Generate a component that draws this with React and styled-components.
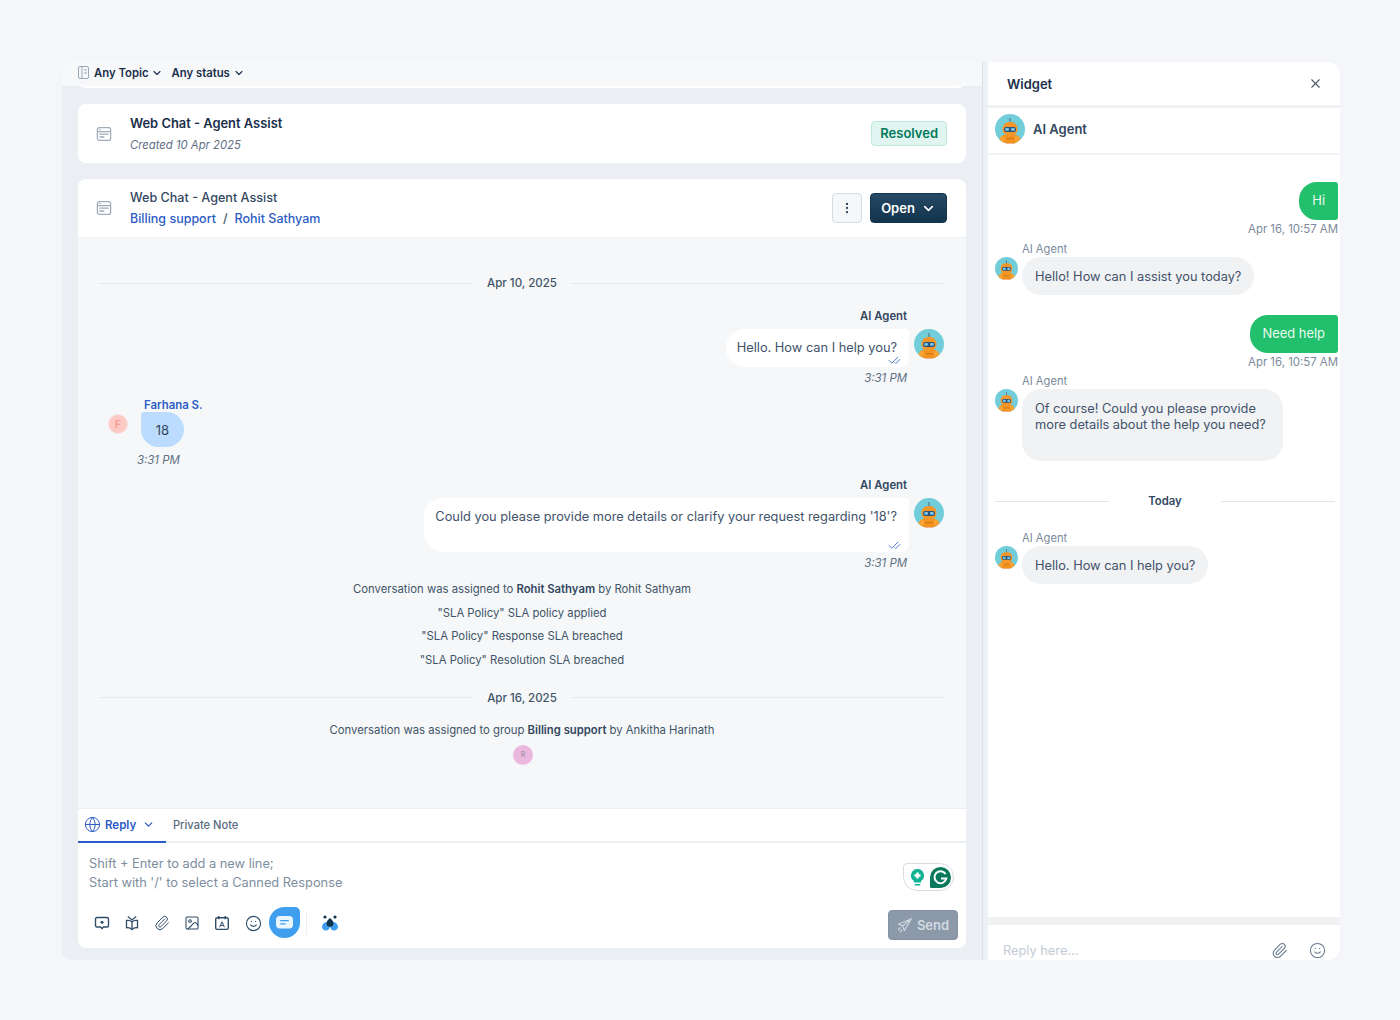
import React from 'react';
import styled, { createGlobalStyle } from 'styled-components';
import { ChevronDown, X, EllipsisVertical, CheckCheck, Globe, Paperclip, Smile, Image } from 'lucide-react';

const GlobalStyle = createGlobalStyle`
  html, body { margin: 0; padding: 0; background: #f5f6f9; }
  body { font-family: Inter, "Noto Sans", sans-serif; color: #1b2f4b; -webkit-font-smoothing: antialiased; }
`;

const RobotIcon = ({ size = 30 }) => (
  <svg width={size} height={size} viewBox="0 0 30 30" style={{ flex: 'none', display: 'block' }}>
    <defs><clipPath id="robot-clip"><circle cx="15" cy="15" r="15" /></clipPath></defs>
    <g clipPath="url(#robot-clip)">
      <rect width="30" height="30" fill="#70cdd9" />
      <rect x="14.5" y="4" width="1" height="5" fill="#4f6a80" />
      <path d="M8 30v-9h14v9z" fill="#f2931f" />
      <path d="M3.500 27l3-5.500 4 1-1 5-3.500 1z M26.500 27l-3-5.500-4 1 1 5 3.500 1z" fill="#f7a233" />
      <rect x="7.500" y="8" width="15" height="14" rx="6.500" fill="#f5962a" />
      <rect x="9" y="13" width="12" height="5" rx="2.200" fill="#27557c" />
      <rect x="10.200" y="14" width="3.800" height="2.800" rx="1.100" fill="#7cc4e4" />
      <rect x="16" y="14" width="3.800" height="2.800" rx="1.100" fill="#7cc4e4" />
      <rect x="11" y="24" width="8" height="1.200" rx=".6" fill="#d4761a" />
      <path d="M8 30h14v-1H8z" fill="#fbb8a4" />
    </g>
  </svg>
);

const TicketIcon = () => (
  <svg width="16" height="16" viewBox="0 0 16 16" fill="none" stroke="#a1adbb" strokeWidth="1.3" style={{ flex: 'none' }}>
    <rect x="1.4" y="1.6" width="13.2" height="12.8" rx="2" />
    <path d="M1.4 5.6h13.2M3.4 3.6h1.4M3.4 8.2h9.2M3.4 11h5" />
  </svg>
);

const ScreenIcon = () => (
  <svg width="16" height="16" viewBox="0 0 16 16" fill="none" stroke="currentColor" strokeWidth="1.4">
    <path d="M3 2.5h10a1.5 1.5 0 0 1 1.5 1.5v6.5a1.5 1.5 0 0 1-1.5 1.5H9.5L8 13.5 6.5 12H3a1.5 1.5 0 0 1-1.5-1.5V4A1.5 1.5 0 0 1 3 2.5z" />
    <circle cx="8" cy="7.2" r="1.5" fill="currentColor" stroke="none" />
  </svg>
);

const BookIcon = () => (
  <svg width="16" height="16" viewBox="0 0 16 16" fill="none" stroke="currentColor" strokeWidth="1.3">
    <path d="M2.5 5.5C4.5 5 6.5 5.5 8 6.8c1.5-1.3 3.5-1.8 5.5-1.3v7.3c-2-.4-4 .1-5.5 1.7-1.5-1.6-3.5-2.1-5.5-1.7z" />
    <path d="M8 6.8v7M3.8 1.5L8 5l4.2-3.5" />
  </svg>
);

const CalendarIcon = () => (
  <svg width="16" height="16" viewBox="0 0 16 16" fill="none" stroke="currentColor" strokeWidth="1.4">
    <rect x="1.7" y="2.8" width="12.6" height="11.6" rx="1.4" />
    <path d="M4.8 1v3.2M11.2 1v3.2" />
    <path d="M5.6 12.2L8 6.8l2.4 5.4M6.5 10.4h3" strokeWidth="1" />
  </svg>
);

const Page = styled.div`
  width: 1400px;
  height: 1020px;
  padding: 62px 60px 60px 61px;
  box-sizing: border-box;
  overflow: hidden;
`;

const Shell = styled.div`
  display: flex;
  height: 898px;
  border-radius: 12px;
  overflow: hidden;
  background: #ebeef3;
`;

const Main = styled.div`
  width: 921px;
  flex: none;
  padding: 0 16px 12px 16px;
  border-left: 1px solid #f2f4f7;
  box-sizing: border-box;
  display: flex;
  flex-direction: column;
`;

const FilterBar = styled.div`
  height: 24px;
  flex: none;
  margin: 0 -16px;
  padding: 0 16px;
  background: #f7f8fa;
`;

const FilterRow = styled.div`
  height: 26px;
  background: #f7f8fa;
  border-bottom: 2px solid #fff;
  border-radius: 0 0 8px 8px;
  box-sizing: border-box;
  display: flex;
  align-items: center;
  padding: 0 0 3px 0;
  font-size: 11.3px;
  font-weight: 600;
`;

const Filter = styled.span`
  display: flex;
  align-items: center;
  gap: 3px;
  margin-right: 8px;
`;

const FilterIcon = styled.span`
  display: flex;
  margin-right: 5px;
`;

const Card = styled.div`
  background: #fff;
  border-radius: 8px;
  margin-top: 18px;
  height: 59px;
  flex: none;
  display: flex;
  align-items: center;
  padding: 0 19px 0 18px;
  box-sizing: border-box;
`;

const CardHead = styled(Card)`
  margin-top: 16px;
  border-radius: 8px 8px 0 0;
  border-bottom: 1px solid #ebeff3;
`;

const CardText = styled.div`
  margin-left: 18px;
  flex: 1;
  display: flex;
  flex-direction: column;
  gap: ${p => p.$gap}px;
  padding-top: ${p => p.$drop || 0}px;
`;

const CardTitle = styled.div`
  font-size: ${p => (p.$bold ? 12.9 : 12.6)}px;
  line-height: 16px;
  font-weight: ${p => (p.$bold ? 600 : 500)};
  color: ${p => (p.$bold ? '#1b2f4b' : '#33475f')};
`;

const Created = styled.div`
  font-size: 11.3px;
  line-height: 15px;
  font-style: italic;
  color: #5f7085;
`;

const Crumbs = styled.div`
  font-size: 12.5px;
  line-height: 15px;
  font-weight: 500;
  color: #2c5cc5;
  display: flex;
  gap: 7px;
  span { color: #475867; }
`;

const Resolved = styled.span`
  height: 25px;
  padding: 0 8px;
  line-height: 23px;
  box-sizing: border-box;
  background: #e0f5f0;
  border: 1px solid #bfe9dd;
  border-radius: 4px;
  color: #00795b;
  font-size: 13px;
  font-weight: 600;
`;

const MoreButton = styled.button`
  width: 30px;
  height: 30px;
  padding: 0;
  margin-right: 8px;
  background: #f5f7f9;
  border: 1px solid #d5dce4;
  border-radius: 4px;
  color: #33475f;
  display: flex;
  align-items: center;
  justify-content: center;
`;

const OpenButton = styled.button`
  width: 77px;
  height: 30px;
  background: linear-gradient(#264966, #12344d);
  border: 1px solid #12344d;
  border-radius: 4px;
  color: #fff;
  font: 600 13px Inter, sans-serif;
  display: flex;
  align-items: center;
  justify-content: center;
  gap: 6px;
  padding: 0;
`;

const Thread = styled.div`
  flex: 1;
  background: #f5f7f9;
  padding: 0 21px;
  display: flex;
  flex-direction: column;
`;

const DateRow = styled.div`
  display: flex;
  align-items: center;
  gap: 14px;
  margin-top: ${p => p.$top}px;
  height: 16px;
  font-size: 11.5px;
  font-weight: 500;
  color: #3f5468;
  &::before, &::after { content: ''; flex: 1; height: 1px; background: #e6e9ee; }
`;

const AgentBlock = styled.div`
  margin-top: ${p => p.$top}px;
  display: flex;
  justify-content: flex-end;
  gap: 5px;
  padding-right: 1px;
`;

const AgentStack = styled.div`
  display: flex;
  flex-direction: column;
  align-items: flex-end;
`;

const AgentName = styled.div`
  font-size: 11.3px;
  line-height: 14px;
  font-weight: 600;
  color: #33475f;
  margin: 0 2px 6px 0;
`;

const AgentBubble = styled.div`
  position: relative;
  background: #fff;
  border-radius: 19px 4px 8px 19px;
  padding: 10px 12px 0 11px;
  height: ${p => p.$h}px;
  box-sizing: border-box;
  font-size: 12.8px;
  line-height: 18px;
  color: #41526a;
`;

const Ticks = styled.span`
  position: absolute;
  right: 8px;
  bottom: 0;
  color: #2c5cc5;
  display: flex;
`;

const Time = styled.div`
  font-size: 11.4px;
  line-height: 14px;
  font-style: italic;
  color: #5f7085;
  margin: 4px 2px 0 0;
`;

const AgentAvatar = styled.div`
  margin-top: 20px;
`;

const UserBlock = styled.div`
  margin-top: 12px;
  height: 72px;
  display: grid;
  grid-template-columns: 33px auto 1fr;
  grid-template-rows: 15px 35px 22px;
  padding-left: 9px;
`;

const UserName = styled.div`
  grid-column: 2 / 4;
  font-size: 11.4px;
  line-height: 14px;
  font-weight: 600;
  color: #2c5cc5;
  padding-left: 3px;
  margin-top: 1px;
`;

const UserAvatar = styled.div`
  grid-row: 2;
  width: 20px;
  height: 20px;
  border-radius: 50%;
  background: #fdc9c4;
  color: #f79f92;
  border: 1px solid #fbe3e0;
  box-sizing: border-box;
  font-size: 11px;
  font-weight: 600;
  display: flex;
  align-items: center;
  justify-content: center;
  margin-top: 2px;
`;

const UserBubble = styled.div`
  grid-row: 2;
  width: 43px;
  background: #bbdcfe;
  border-radius: 4px 20px 20px 20px;
  font-size: 13px;
  color: #33475f;
  display: flex;
  align-items: center;
  justify-content: center;
`;

const UserTime = styled.div`
  grid-column: 1 / 4;
  padding-left: 29px;
  font-size: 11.4px;
  font-style: italic;
  color: #5f7085;
  line-height: 14px;
  margin-top: 6px;
`;

const SystemList = styled.div`
  margin-top: ${p => p.$top}px;
  display: flex;
  flex-direction: column;
  gap: 9.6px;
  align-items: center;
  font-size: 11.3px;
  line-height: 14px;
  color: #3f5468;
  b { font-weight: 600; color: #33475f; }
`;

const TinyAvatar = styled.div`
  width: 20px;
  height: 20px;
  border-radius: 50%;
  background: #eab8de;
  color: #a795a8;
  font-size: 7px;
  font-weight: 600;
  display: flex;
  align-items: center;
  justify-content: center;
  align-self: center;
  margin-top: 8px;
  margin-left: 2px;
`;

const Composer = styled.div`
  height: 140px;
  flex: none;
  background: #fff;
  border-radius: 0 0 8px 8px;
  display: flex;
  flex-direction: column;
  position: relative;
`;

const Tabs = styled.div`
  height: 35px;
  flex: none;
  box-sizing: border-box;
  border-top: 1px solid #ebeff3;
  border-bottom: 2px solid #ebeff3;
  display: flex;
`;

const ReplyTab = styled.div`
  width: 88px;
  height: 35px;
  margin-top: -1px;
  box-sizing: border-box;
  border-bottom: 2px solid #2c5cc5;
  display: flex;
  align-items: center;
  padding-left: 6px;
  color: #2c5cc5;
  font-size: 11.5px;
  font-weight: 600;
  gap: 4px;
`;

const NoteTab = styled.div`
  margin-left: 7px;
  font-size: 11.1px;
  font-weight: 500;
  color: #5a6b7e;
  line-height: 32px;
`;

const Placeholder = styled.div`
  padding: 11px 0 0 11px;
  font-size: 12.8px;
  line-height: 19px;
  color: #7d8ea0;
`;

const GrammarlyPill = styled.div`
  position: absolute;
  right: 12px;
  top: 55px;
  width: 51px;
  height: 28px;
  box-sizing: border-box;
  border: 1px solid #d8dde5;
  border-radius: 4px 14px 14px 14px;
  display: flex;
  align-items: center;
  gap: 5px;
  padding-left: 6px;
`;

const ToolRow = styled.div`
  display: flex;
  align-items: center;
  height: 32px;
  margin-top: 15px;
  padding-left: 16px;
`;

const Tool = styled.span`
  width: ${p => p.$w || 30}px;
  flex: none;
  display: flex;
  color: #2f4d69;
`;

const BlueBlob = styled.span`
  width: 31px;
  height: 31px;
  flex: none;
  margin-top: -1px;
  background: #3f9fee;
  border-radius: 50% 5px 50% 50%;
  display: flex;
  align-items: center;
  justify-content: center;
`;

const ToolDivider = styled.span`
  width: 1px;
  height: 24px;
  background: #ebeff3;
  margin: 0 14px 0 6px;
`;

const SendButton = styled.button`
  position: absolute;
  right: 8px;
  bottom: 8px;
  width: 70px;
  height: 30px;
  padding: 0;
  background: #8c99a9;
  border: 1px solid #8492a3;
  border-radius: 4px;
  color: #d3dae1;
  font: 600 13px Inter, sans-serif;
  display: flex;
  align-items: center;
  justify-content: center;
  gap: 5px;
`;

const Splitter = styled.div`
  width: 6px;
  flex: none;
  box-sizing: border-box;
  background: #edf0f4;
  border-left: 1px solid #dde1e7;
`;

const Widget = styled.div`
  flex: 1;
  background: #fff;
  display: flex;
  flex-direction: column;
`;

const WidgetHead = styled.div`
  height: 46px;
  flex: none;
  box-sizing: border-box;
  border-bottom: 3px solid #eff1f4;
  display: flex;
  align-items: center;
  justify-content: space-between;
  padding: 0 17px 0 19px;
  font-size: 13px;
  font-weight: 600;
`;

const AgentHead = styled.div`
  height: 47px;
  flex: none;
  box-sizing: border-box;
  border-bottom: 2px solid #f2f4f6;
  display: flex;
  align-items: center;
  gap: 8px;
  padding: 0 0 3px 7px;
  font-size: 13px;
  font-weight: 600;
  color: #33475f;
`;

const WidgetChat = styled.div`
  flex: 1;
  padding: 27px 2px 0 7px;
  display: flex;
  flex-direction: column;
`;

const GreenRow = styled.div`
  display: flex;
  flex-direction: column;
  align-items: flex-end;
  margin-top: ${p => p.$top || 0}px;
`;

const GreenBubble = styled.div`
  background: #22c06c;
  color: #eafaf1;
  border-radius: 18px 3px 3px 18px;
  height: 38px;
  line-height: 38px;
  padding: 0 13px;
  font-size: 12.9px;
`;

const StampRight = styled.div`
  font-size: 11.4px;
  line-height: 14px;
  color: #7b8a9b;
  margin-top: 2px;
`;

const BotMessage = styled.div`
  display: grid;
  grid-template-columns: 27px 1fr;
  margin-top: ${p => p.$top}px;
`;

const BotName = styled.div`
  grid-column: 2;
  font-size: 11.2px;
  line-height: 16px;
  color: #7b8a9b;
  height: 16px;
`;

const BotBubble = styled.div`
  justify-self: start;
  background: #f1f2f4;
  border-radius: 19px;
  padding: 12px 13px 0;
  height: ${p => p.$h}px;
  width: ${p => (p.$w ? `${p.$w}px` : 'auto')};
  box-sizing: border-box;
  font-size: 12.8px;
  line-height: 16px;
  color: #41526a;
  white-space: pre-line;
`;

const TodayRow = styled.div`
  display: flex;
  align-items: center;
  margin-top: 32px;
  height: 16px;
  gap: 39px;
  padding-right: 3px;
  font-size: 11.3px;
  font-weight: 600;
  color: #33475f;
  &::before, &::after { content: ''; flex: 1; height: 1px; background: #e2e5ea; }
`;

const ReplyBar = styled.div`
  height: 43px;
  flex: none;
  box-sizing: border-box;
  border-top: 8px solid #f0f1f3;
  display: flex;
  align-items: center;
  padding: 15px 14px 0 15px;
  font-size: 12.8px;
  color: #c3cbd5;
`;

const ReplyText = styled.div`
  flex: 1;
`;

const ReplyIcon = styled.span`
  display: flex;
  margin-left: ${p => p.$gap || 0}px;
  color: #64788c;
`;

const topics = ['Any Topic', 'Any status'];
const systemOne = [
  <>Conversation was assigned to <b>Rohit Sathyam</b> by Rohit Sathyam</>,
  '"SLA Policy" SLA policy applied',
  '"SLA Policy" Response SLA breached',
  '"SLA Policy" Resolution SLA breached',
];

export default function App() {
  return (
    <Page>
      <GlobalStyle />
      <Shell>
        <Main>
          <FilterBar>
            <FilterRow>
              <FilterIcon>
                <svg width="11" height="13" viewBox="0 0 11 13" fill="none" stroke="#9aa7b6" strokeWidth="1">
                  <rect x=".5" y=".5" width="10" height="12" rx="1.5" />
                  <path d="M4 .5v12M6 4h3M6 7h3" />
                </svg>
              </FilterIcon>
              {topics.map(t => (
                <Filter key={t}>{t}<ChevronDown size={12} strokeWidth={2.2} /></Filter>
              ))}
            </FilterRow>
          </FilterBar>

          <Card>
            <TicketIcon />
            <CardText $gap={6} $drop={2}>
              <CardTitle $bold>Web Chat - Agent Assist</CardTitle>
              <Created>Created 10 Apr 2025</Created>
            </CardText>
            <Resolved>Resolved</Resolved>
          </Card>

          <CardHead>
            <TicketIcon />
            <CardText $gap={5}>
              <CardTitle>Web Chat - Agent Assist</CardTitle>
              <Crumbs>Billing support <span>/</span> Rohit Sathyam</Crumbs>
            </CardText>
            <MoreButton><EllipsisVertical size={14} /></MoreButton>
            <OpenButton>Open <ChevronDown size={15} strokeWidth={2.5} /></OpenButton>
          </CardHead>

          <Thread>
            <DateRow $top={37}>Apr 10, 2025</DateRow>

            <AgentBlock $top={18}>
              <AgentStack>
                <AgentName>AI Agent</AgentName>
                <AgentBubble $h={38}>
                  Hello. How can I help you?
                  <Ticks><CheckCheck size={13} strokeWidth={1.5} /></Ticks>
                </AgentBubble>
                <Time>3:31 PM</Time>
              </AgentStack>
              <AgentAvatar><RobotIcon /></AgentAvatar>
            </AgentBlock>

            <UserBlock>
              <span />
              <UserName>Farhana S.</UserName>
              <UserAvatar>F</UserAvatar>
              <UserBubble>18</UserBubble>
              <span />
              <UserTime>3:31 PM</UserTime>
            </UserBlock>

            <AgentBlock $top={9}>
              <AgentStack>
                <AgentName>AI Agent</AgentName>
                <AgentBubble $h={54}>
                  Could you please provide more details or clarify your request regarding '18'?
                  <Ticks><CheckCheck size={13} strokeWidth={1.5} /></Ticks>
                </AgentBubble>
                <Time>3:31 PM</Time>
              </AgentStack>
              <AgentAvatar><RobotIcon /></AgentAvatar>
            </AgentBlock>

            <SystemList $top={12}>
              {systemOne.map((line, i) => <div key={i}>{line}</div>)}
            </SystemList>

            <DateRow $top={23}>Apr 16, 2025</DateRow>

            <SystemList $top={17}>
              <div>Conversation was assigned to group <b>Billing support</b> by Ankitha Harinath</div>
            </SystemList>
            <TinyAvatar>R</TinyAvatar>
          </Thread>

          <Composer>
            <Tabs>
              <ReplyTab>
                <Globe size={17} strokeWidth={1.4} />
                <span>Reply</span>
                <ChevronDown size={13} strokeWidth={2.2} style={{ marginLeft: 2 }} />
              </ReplyTab>
              <NoteTab>Private Note</NoteTab>
            </Tabs>
            <Placeholder>
              Shift + Enter to add a new line;<br />
              Start with '/' to select a Canned Response
            </Placeholder>
            <GrammarlyPill>
              <svg width="15" height="19" viewBox="0 0 15 19">
                <path d="M7.5 1a6.5 6.5 0 0 1 3.5 12v1.5H4V13A6.5 6.5 0 0 1 7.5 1z" fill="#10b294" />
                <path d="M6.3 4.5h2.4v1.8h1.8v2.4H8.7v1.8H6.3V8.7H4.5V6.3h1.8z" fill="#fff" />
                <rect x="4.5" y="16" width="6" height="1.6" rx=".8" fill="#10b294" />
              </svg>
              <svg width="21" height="21" viewBox="0 0 21 21">
                <path d="M10.5 0A10.5 10.5 0 1 1 10.5 21H1.5a1.5 1.5 0 0 1-1.5-1.5V10.5A10.5 10.5 0 0 1 10.5 0z" fill="#0b7a5c" />
                <path d="M15.6 7A6 6 0 1 0 16.4 11.4H11" fill="none" stroke="#fff" strokeWidth="2" />
              </svg>
            </GrammarlyPill>
            <ToolRow>
              <Tool><ScreenIcon /></Tool>
              <Tool><BookIcon /></Tool>
              <Tool><Paperclip size={16} strokeWidth={1.5} /></Tool>
              <Tool><Image size={16} strokeWidth={1.6} /></Tool>
              <Tool><CalendarIcon /></Tool>
              <Tool $w={24} style={{ marginLeft: 1 }}><Smile size={17} strokeWidth={1.6} /></Tool>
              <BlueBlob>
                <svg width="17" height="13" viewBox="0 0 17 13">
                  <rect width="17" height="12.5" rx="4" fill="#eaf5fe" />
                  <path d="M4.2 4.6h8.6M4.2 7.8h5.4" stroke="#3f9fee" strokeWidth="1.3" />
                </svg>
              </BlueBlob>
              <ToolDivider />
              <svg width="18" height="17" viewBox="0 0 18 17">
                <circle cx="4" cy="2" r="1.6" fill="#12344d" />
                <circle cx="14" cy="2" r="1.6" fill="#12344d" />
                <path d="M6 7c2 0 3 2 3 3.5 0 3-1.5 5-4 5-2.5 0-4-1.7-4-3.7C1 9.3 3.5 7 6 7z" fill="#3f9fee" />
                <path d="M12 7c-2 0-3 2-3 3.5 0 3 1.5 5 4 5 2.5 0 4-1.7 4-3.7C17 9.3 14.5 7 12 7z" fill="#3f9fee" />
                <path d="M9 3c2 1.5 3.5 3.5 3.5 5.3a3.5 3.5 0 0 1-7 0C5.5 6.5 7 4.500 9 3z" fill="#12344d" />
              </svg>
            </ToolRow>
            <SendButton>
              <svg width="15" height="15" viewBox="0 0 15 15" fill="none" stroke="#d3dae1" strokeWidth="1.1">
                <path d="M14 1L1.5 6l4 2 1.8 4.500zM14 1L5.5 8M1 12l2.5-2.5M3 14l2-2" />
              </svg>
              Send
            </SendButton>
          </Composer>
        </Main>

        <Splitter />

        <Widget>
          <WidgetHead>
            Widget
            <X size={15} strokeWidth={1.7} color="#475867" />
          </WidgetHead>
          <AgentHead><RobotIcon /> AI Agent</AgentHead>
          <WidgetChat>
            <GreenRow>
              <GreenBubble>Hi</GreenBubble>
              <StampRight>Apr 16, 10:57 AM</StampRight>
            </GreenRow>
            <BotMessage $top={5}>
              <BotName>AI Agent</BotName>
              <RobotIcon size={23} />
              <BotBubble $h={38}>Hello! How can I assist you today?</BotBubble>
            </BotMessage>
            <GreenRow $top={20}>
              <GreenBubble>Need help</GreenBubble>
              <StampRight>Apr 16, 10:57 AM</StampRight>
            </GreenRow>
            <BotMessage $top={4}>
              <BotName>AI Agent</BotName>
              <RobotIcon size={23} />
              <BotBubble $h={72} $w={261}>{'Of course! Could you please provide\nmore details about the help you need?'}</BotBubble>
            </BotMessage>
            <TodayRow>Today</TodayRow>
            <BotMessage $top={21}>
              <BotName>AI Agent</BotName>
              <RobotIcon size={23} />
              <BotBubble $h={38}>Hello. How can I help you?</BotBubble>
            </BotMessage>
          </WidgetChat>
          <ReplyBar>
            <ReplyText>Reply here...</ReplyText>
            <ReplyIcon><Paperclip size={17} strokeWidth={1.5} /></ReplyIcon>
            <ReplyIcon $gap={21}><Smile size={17} strokeWidth={1.5} /></ReplyIcon>
          </ReplyBar>
        </Widget>
      </Shell>
    </Page>
  );
}
